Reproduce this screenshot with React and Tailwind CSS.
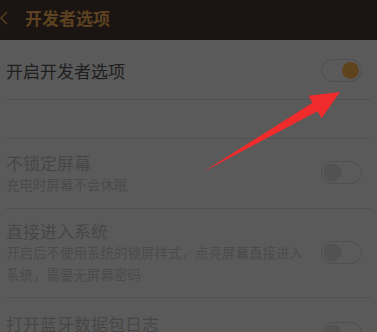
import React from 'react';

const font = { fontFamily: '"Noto Sans CJK SC", "Noto Sans", sans-serif' };

const Toggle = ({ on }) => (
    <div className="w-[41px] h-[23px] rounded-full border border-[#4e4e4e] flex items-center px-[2px] shrink-0">
        {on ? (
            <div className="ml-auto w-[17px] h-[17px] rounded-full bg-[#5e431d]" />
        ) : (
            <div className="w-[17px] h-[17px] rounded-full bg-[#525252] border border-[#4e4e4e]" />
        )}
    </div>
);

const App = () => {
    return (
        <div className="relative w-[377px] h-[332px] overflow-hidden bg-[#5a5a5a]" style={font}>
            {/* header */}
            <div className="h-[40px] bg-[#1a1512] flex items-center">
                <svg width="10" height="16" viewBox="0 0 10 16" className="ml-[0px] mb-[4px]">
                    <polyline points="7,2 1,8 7,14" fill="none" stroke="#5a4220" strokeWidth="1.4" />
                </svg>
                <span className="ml-[15px] mb-[5px] text-[17px] font-bold text-[#5c4220] leading-none">开发者选项</span>
            </div>

            <div className="px-[6px]">
                {/* row 1 */}
                <div className="h-[60px] border-b border-[#505050] flex items-center justify-between">
                    <span className="text-[17px] text-[#1f1f1f] leading-none mt-[1px]">开启开发者选项</span>
                    <div className="mr-[9px] mt-[1px]"><Toggle on /></div>
                </div>
                <div className="h-[39px] border-b border-[#505050]" />

                {/* row 2 */}
                <div className="h-[70px] border-b border-[#505050] flex items-center justify-between">
                    <div className="pt-[1px]">
                        <div className="text-[17px] leading-[20px] text-[#464646]">不锁定屏幕</div>
                        <div className="text-[13.5px] leading-[22px] text-[#4a4a4a]">充电时屏幕不会休眠</div>
                    </div>
                    <div className="mr-[9px] mb-[2px]"><Toggle /></div>
                </div>

                {/* row 3 */}
                <div className="h-[89px] border-b border-[#505050] flex items-center justify-between">
                    <div className="mb-[1px]">
                        <div className="text-[17px] leading-[20px] text-[#464646]">直接进入系统</div>
                        <div className="text-[13.5px] leading-[22px] text-[#4a4a4a] w-[300px]">开启后不使用系统的锁屏样式，点亮屏幕直接进入系统，需要无屏幕密码</div>
                    </div>
                    <div className="mr-[9px] mb-[2px]"><Toggle /></div>
                </div>

                {/* row 4 */}
                <div className="h-[70px] flex justify-between pt-[16px]">
                    <div className="text-[17px] leading-[20px] text-[#464646]">打开蓝牙数据包日志</div>
                    <div className="mr-[9px] mt-[8px]"><Toggle /></div>
                </div>
            </div>

            {/* annotation arrow */}
            <svg className="absolute left-0 top-0 pointer-events-none" width="377" height="332" viewBox="0 0 377 332">
                <polygon
                    points="203,172 312.5,102.7 308.4,95.8 340,92 321.6,118.2 317.5,111.3"
                    fill="#f02b2b"
                />
            </svg>
        </div>
    );
};

export default App;
